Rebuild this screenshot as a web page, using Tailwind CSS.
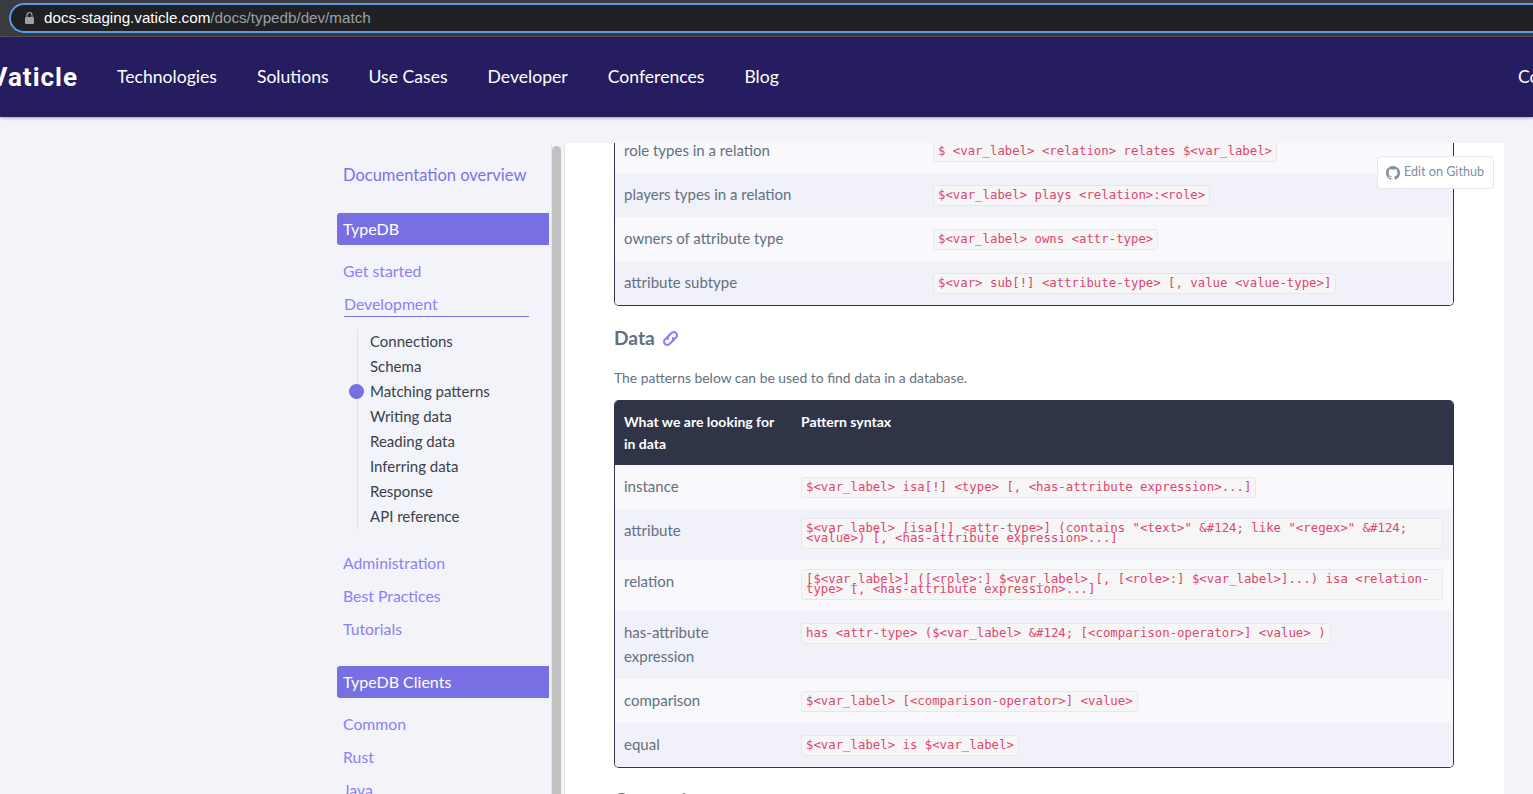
<!DOCTYPE html>
<html lang="en">
<head>
    <meta charset="UTF-8">
    <meta name="viewport" content="width=device-width, initial-scale=1.0">
    <title>match</title>
    <script src="https://cdn.jsdelivr.net/npm/@tailwindcss/browser@4"></script>
</head>
<body class="h-[794px] overflow-hidden bg-[#f3f4fa] font-['Lato','Open_Sans',sans-serif]">
    <!-- browser address bar -->
    <div class="h-[37px] bg-[#3a3b3f] pt-[3px] pl-[9px] border-b border-[#55565a] overflow-hidden">
        <div class="h-[30px] w-[1700px] rounded-full border-2 border-[#5e97e8] bg-[#202124] flex items-center pl-[14px] font-['Liberation_Sans',sans-serif] text-[15.200px]">
            <svg class="w-[9px] h-[12px] mr-[10px]" viewBox="0 0 9 12" fill="#9aa0a6"><path d="M1 5h7a1 1 0 0 1 1 1v5a1 1 0 0 1-1 1H1a1 1 0 0 1-1-1V6a1 1 0 0 1 1-1z"/><path d="M2 5V3a2.500 2.500 0 0 1 5 0v2" fill="none" stroke="#9aa0a6" stroke-width="1.200"/></svg>
            <span class="text-white">docs-staging.vaticle.com</span><span class="text-[#9aa0a6]">/docs/typedb/dev/match</span>
        </div>
    </div>

    <!-- site nav -->
    <div class="relative z-10 h-[80px] bg-[#261d60] shadow-[0_1px_3px_rgba(0,0,0,0.35)] flex items-center text-white text-[17.600px] overflow-hidden">
        <div class="w-[117px] shrink-0 flex justify-end pr-[39px]">
            <span class="text-[26px] font-bold tracking-[1px] font-['Roboto',sans-serif]">Vaticle</span>
        </div>
        <div class="flex-1 flex gap-[40px]">
            <a>Technologies</a>
            <a>Solutions</a>
            <a>Use Cases</a>
            <a>Developer</a>
            <a>Conferences</a>
            <a>Blog</a>
        </div>
        <a class="absolute left-[1518px]">Community</a>
    </div>

    <div class="flex pt-[26px]">
        <!-- sidebar -->
        <div class="w-[549px] shrink-0 pl-[337px] text-[15.800px] text-[#7b71e8]">
            <a class="block pl-[6px] pt-[20px] text-[16.500px] leading-[24px]">Documentation overview</a>
            <div class="mt-[26px] h-[32px] bg-[#786fe4] rounded-l-[3px] pl-[6px] text-white text-[16px] leading-[32px]">TypeDB</div>
            <a class="block pl-[6px] mt-[14px] leading-[24px] text-[#8a80f7]">Get started</a>
            <div class="ml-[7px] w-[185px] mt-[9px] border-b border-[#786fe4] leading-[24px] h-[25px] text-[#8a80f7]">Development</div>
            <ul class="relative ml-[20px] mt-[12px] border-l border-[#dfe1e8] pl-[12px] text-[15px] text-[#3a3f4b] leading-[25px]">
                <li>Connections</li>
                <li>Schema</li>
                <li class="relative"><span class="absolute left-[-21px] top-[5px] w-[15px] h-[15px] rounded-full bg-[#786fe4]"></span>Matching patterns</li>
                <li>Writing data</li>
                <li>Reading data</li>
                <li>Inferring data</li>
                <li>Response</li>
                <li>API reference</li>
            </ul>
            <a class="block pl-[6px] mt-[22px] leading-[24px] text-[#8a80f7]">Administration</a>
            <a class="block pl-[6px] mt-[9px] leading-[24px] text-[#8a80f7]">Best Practices</a>
            <a class="block pl-[6px] mt-[9px] leading-[24px] text-[#8a80f7]">Tutorials</a>
            <div class="mt-[25px] h-[32px] bg-[#786fe4] rounded-l-[3px] pl-[6px] text-white text-[16px] leading-[32px]">TypeDB Clients</div>
            <a class="block pl-[6px] mt-[14px] leading-[24px] text-[#8a80f7]">Common</a>
            <a class="block pl-[6px] mt-[9px] leading-[24px] text-[#8a80f7]">Rust</a>
            <a class="block pl-[6px] mt-[9px] leading-[24px] text-[#8a80f7]">Java</a>
        </div>
        <div class="w-[3px] shrink-0 border-r border-[#e6e7ee]"></div>
        <!-- scrollbar -->
        <div class="w-[9px] shrink-0 h-[700px] mt-[3px] rounded-t-full bg-[#c1c1c1]"></div>
        <div class="w-[3px] shrink-0"></div>

        <!-- content panel -->
        <div class="relative w-[940px] h-[700px] bg-white border-l border-[#e6e7ee] overflow-hidden">
            <div class="absolute z-10 left-[812px] top-[13px] h-[33px] w-[117px] rounded-[4px] border border-[#e6e7ee] bg-white flex items-center pl-[8px] gap-[4px] text-[12.600px] text-[#7f8ea0]">
                <svg class="w-[14px] h-[14px]" viewBox="0 0 16 16" fill="#7f8ea0"><path d="M8 0C3.580 0 0 3.580 0 8c0 3.540 2.290 6.530 5.470 7.590.4.070.55-.17.55-.38 0-.19-.01-.82-.01-1.490-2.010.37-2.530-.49-2.690-.94-.09-.23-.48-.94-.82-1.130-.28-.15-.68-.52-.01-.53.630-.01 1.080.58 1.230.82.720 1.210 1.870.87 2.330.66.070-.52.280-.87.510-1.070-1.780-.2-3.640-.89-3.640-3.950 0-.87.31-1.590.82-2.150-.08-.2-.36-1.020.08-2.120 0 0 .67-.21 2.200.82.64-.18 1.320-.27 2-.27s1.360.09 2 .27c1.530-1.040 2.200-.82 2.200-.82.440 1.100.160 1.920.08 2.120.510.56.82 1.270.82 2.150 0 3.070-1.870 3.750-3.650 3.950.29.25.54.73.54 1.480 0 1.070-.01 1.930-.01 2.200 0 .21.150.46.55.38A8.010 8.010 0 0 0 16 8c0-4.420-3.580-8-8-8z"/></svg>
                <span>Edit on Github</span>
            </div>

            <div class="pl-[49px] w-[889px] -mt-[14px] text-[15px] text-[#63707f]">
                <!-- schema table, scrolled partly out of view -->
                <table class="w-[840px] table-fixed border-separate border-spacing-0 rounded-[5px] overflow-hidden border-b border-x border-[#2f3447]">
                    <colgroup><col class="w-[309px]"><col></colgroup>
                    <tbody>
                        <tr class="h-[44px] bg-[#f8f8fd]"><td class="pl-[9px] pb-[2px]">role types in a relation</td><td class="pl-[9px] pb-[2px]"><code class="inline-block h-[21px] px-[4px] rounded-[3px] border border-[#e8e8ea] bg-[#f6f6f7] font-['DejaVu_Sans_Mono',monospace] text-[12.340px] leading-[19px] text-[#e0446f]">$ &lt;var_label&gt; &lt;relation&gt; relates $&lt;var_label&gt;</code></td></tr>
                        <tr class="h-[44px] bg-[#f1f1f9]"><td class="pl-[9px] pb-[2px]">players types in a relation</td><td class="pl-[9px] pb-[2px]"><code class="inline-block h-[21px] px-[4px] rounded-[3px] border border-[#e8e8ea] bg-[#f6f6f7] font-['DejaVu_Sans_Mono',monospace] text-[12.340px] leading-[19px] text-[#e0446f]">$&lt;var_label&gt; plays &lt;relation&gt;:&lt;role&gt;</code></td></tr>
                        <tr class="h-[44px] bg-[#f8f8fd]"><td class="pl-[9px] pb-[2px]">owners of attribute type</td><td class="pl-[9px] pb-[2px]"><code class="inline-block h-[21px] px-[4px] rounded-[3px] border border-[#e8e8ea] bg-[#f6f6f7] font-['DejaVu_Sans_Mono',monospace] text-[12.340px] leading-[19px] text-[#e0446f]">$&lt;var_label&gt; owns &lt;attr-type&gt;</code></td></tr>
                        <tr class="h-[44px] bg-[#f1f1f9]"><td class="pl-[9px] pb-[2px]">attribute subtype</td><td class="pl-[9px] pb-[2px]"><code class="inline-block h-[21px] px-[4px] rounded-[3px] border border-[#e8e8ea] bg-[#f6f6f7] font-['DejaVu_Sans_Mono',monospace] text-[12.340px] leading-[19px] text-[#e0446f]">$&lt;var&gt; sub[!] &lt;attribute-type&gt; [, value &lt;value-type&gt;]</code></td></tr>
                    </tbody>
                </table>

                <h3 class="mt-[17px] h-[30px] flex items-center gap-[7px] text-[19.200px] font-bold text-[#63707f]">
                    Data
                    <svg class="w-[17px] h-[17px]" viewBox="0 0 24 24" fill="none" stroke="#8a80f7" stroke-width="3" stroke-linecap="round"><g transform="rotate(-45 12 12)"><path d="M11 7.500H5.500a4.500 4.500 0 0 0 0 9H11a4.500 4.500 0 0 0 4-2.500"/><path d="M13 16.500h5.500a4.500 4.500 0 0 0 0-9H13a4.500 4.500 0 0 0-4 2.500"/></g></svg>
                </h3>
                <p class="mt-[14px] text-[13.900px] leading-[22px]">The patterns below can be used to find data in a database.</p>

                <!-- data table -->
                <table class="mt-[11px] w-[840px] table-fixed border-separate border-spacing-0 rounded-[5px] border-b border-x border-[#2f3447] overflow-hidden">
                    <colgroup><col class="w-[177px]"><col></colgroup>
                    <thead>
                        <tr class="h-[65px] bg-[#2f3447] text-white text-[14px] font-bold leading-[22px] text-left align-top">
                            <th class="pl-[9px] pr-[10px] pt-[11px] align-top font-bold">What we are looking for in data</th>
                            <th class="pl-[9px] pt-[11px] align-top font-bold">Pattern syntax</th>
                        </tr>
                    </thead>
                    <tbody>
                        <tr class="h-[44px] bg-[#f8f8fd]"><td class="pl-[9px] pb-[2px]">instance</td><td class="pl-[9px] pb-[2px]"><code class="inline-block h-[21px] px-[4px] rounded-[3px] border border-[#e8e8ea] bg-[#f6f6f7] font-['DejaVu_Sans_Mono',monospace] text-[12.340px] leading-[19px] text-[#e0446f]">$&lt;var_label&gt; isa[!] &lt;type&gt; [, &lt;has-attribute expression&gt;...]</code></td></tr>
                        <tr class="h-[51px] bg-[#f1f1f9]"><td class="pl-[9px] pb-[9px]">attribute</td><td class="pl-[9px] pr-[10px] pt-[9px] align-top"><code class="block h-[31px] px-[4px] pt-[4px] rounded-[3px] border border-[#e8e8ea] bg-[#f6f6f7] font-['DejaVu_Sans_Mono',monospace] text-[12.340px] leading-[10px] text-[#e0446f]">$&lt;var_label&gt; [isa[!] &lt;attr-type&gt;] (contains "&lt;text&gt;" &amp;#124; like "&lt;regex&gt;" &amp;#124; &lt;value&gt;) [, &lt;has-attribute expression&gt;...]</code></td></tr>
                        <tr class="h-[51px] bg-[#f8f8fd]"><td class="pl-[9px] pb-[9px]">relation</td><td class="pl-[9px] pr-[10px] pt-[9px] align-top"><code class="block h-[31px] px-[4px] pt-[4px] rounded-[3px] border border-[#e8e8ea] bg-[#f6f6f7] font-['DejaVu_Sans_Mono',monospace] text-[12.340px] leading-[10px] text-[#e0446f]">[$&lt;var_label&gt;] ([&lt;role&gt;:] $&lt;var_label&gt; [, [&lt;role&gt;:] $&lt;var_label&gt;]...) isa &lt;relation-type&gt; [, &lt;has-attribute expression&gt;...]</code></td></tr>
                        <tr class="h-[68px] bg-[#f1f1f9]"><td class="pl-[9px] pr-[10px] pb-[2px] leading-[24px]">has-attribute expression</td><td class="pl-[9px] pt-[9px] align-top"><code class="inline-block h-[21px] px-[4px] rounded-[3px] border border-[#e8e8ea] bg-[#f6f6f7] font-['DejaVu_Sans_Mono',monospace] text-[12.340px] leading-[19px] text-[#e0446f]">has &lt;attr-type&gt; ($&lt;var_label&gt; &amp;#124; [&lt;comparison-operator&gt;] &lt;value&gt; )</code></td></tr>
                        <tr class="h-[44px] bg-[#f8f8fd]"><td class="pl-[9px] pb-[2px]">comparison</td><td class="pl-[9px] pb-[2px]"><code class="inline-block h-[21px] px-[4px] rounded-[3px] border border-[#e8e8ea] bg-[#f6f6f7] font-['DejaVu_Sans_Mono',monospace] text-[12.340px] leading-[19px] text-[#e0446f]">$&lt;var_label&gt; [&lt;comparison-operator&gt;] &lt;value&gt;</code></td></tr>
                        <tr class="h-[44px] bg-[#f1f1f9]"><td class="pl-[9px] pb-[2px]">equal</td><td class="pl-[9px] pb-[2px]"><code class="inline-block h-[21px] px-[4px] rounded-[3px] border border-[#e8e8ea] bg-[#f6f6f7] font-['DejaVu_Sans_Mono',monospace] text-[12.340px] leading-[19px] text-[#e0446f]">$&lt;var_label&gt; is $&lt;var_label&gt;</code></td></tr>
                    </tbody>
                </table>

                <h3 class="mt-[17px] text-[19.200px] font-bold leading-[30px]">Comparison operators</h3>
            </div>
        </div>
    </div>
</body>
</html>
